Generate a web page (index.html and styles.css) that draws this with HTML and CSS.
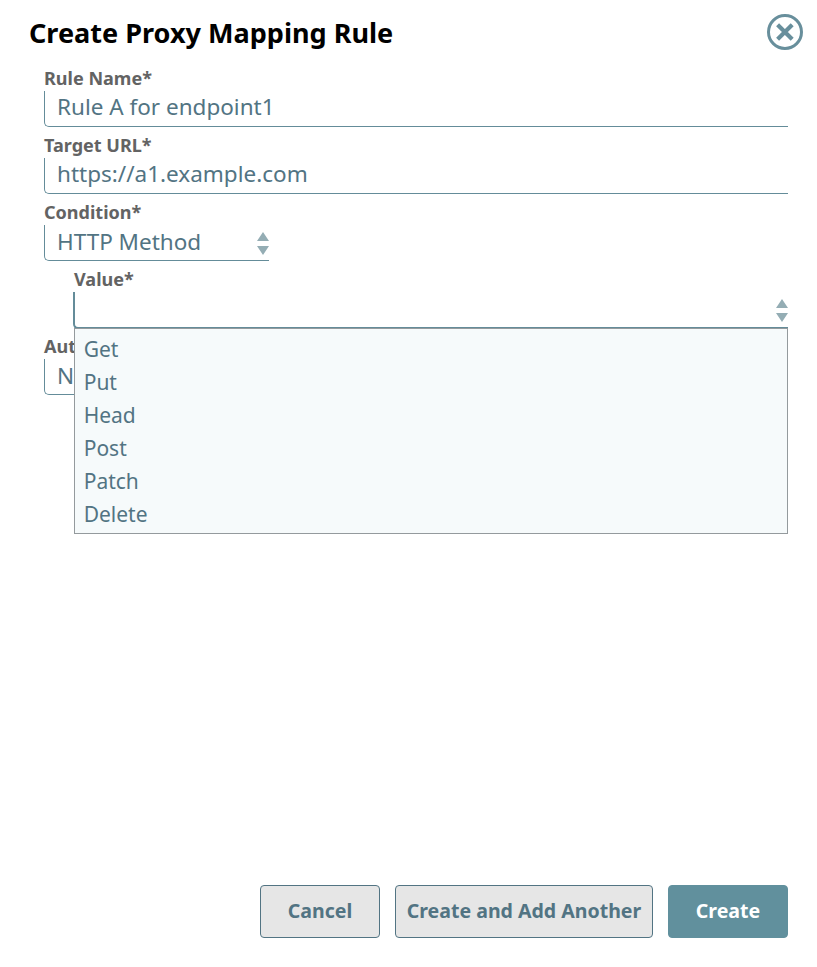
FILE: index.html
```html
<!DOCTYPE html>
<html lang="en">
<head>
<meta charset="utf-8">
<title>Create Proxy Mapping Rule</title>
<link rel="stylesheet" href="styles.css">
</head>
<body>
<main class="dialog">
  <header class="header">
    <h1 class="title">Create Proxy Mapping Rule</h1>
    <svg class="close" viewBox="0 0 36 36" role="img" aria-label="Close">
      <circle cx="18" cy="18" r="16.5" fill="none" stroke="#688f9c" stroke-width="3"/>
      <path d="M10.6 10.8 25.2 25.2M25.2 10.8 10.6 25.2" fill="none" stroke="#688f9c" stroke-width="4.2"/>
    </svg>
  </header>
  <section class="form">
    <div class="field">
      <div class="label">Rule Name*</div>
      <div class="control">Rule A for endpoint1</div>
    </div>
    <div class="field">
      <div class="label">Target URL*</div>
      <div class="control">https://a1.example.com</div>
    </div>
    <div class="field field-short">
      <div class="label">Condition*</div>
      <div class="control control-select">HTTP Method
        <svg class="arrows" viewBox="0 0 12 23"><path d="M6 0 12 9H0ZM0 14H12L6 23Z" fill="#94adb4"/></svg>
      </div>
    </div>
    <div class="field field-nested">
      <div class="label">Value*</div>
      <div class="control control-select control-open">
        <svg class="arrows" viewBox="0 0 12 23"><path d="M6 0 12 9H0ZM0 14H12L6 23Z" fill="#94adb4"/></svg>
      </div>
      <ul class="menu">
        <li>Get</li>
        <li>Put</li>
        <li>Head</li>
        <li>Post</li>
        <li>Patch</li>
        <li>Delete</li>
      </ul>
    </div>
    <div class="field field-short">
      <div class="label">Aut</div>
      <div class="control control-select">N</div>
    </div>
  </section>
  <footer class="actions">
    <button class="button">Cancel</button>
    <button class="button button-wide">Create and Add Another</button>
    <button class="button button-primary">Create</button>
  </footer>
</main>
</body>
</html>
```

FILE: styles.css
```css
* {
  box-sizing: border-box;
}

body {
  margin: 0;
  background: #fff;
  font-family: "Noto Sans", sans-serif;
}

.dialog {
  display: flex;
  flex-direction: column;
  height: 967px;
  padding: 14px 14px 29px 29px;
}

.header {
  display: flex;
  justify-content: space-between;
  height: 53px;
}

.title {
  margin: 0;
  color: #000;
  font-size: 27.06px;
  font-weight: 700;
  line-height: 38px;
}

.close {
  width: 36px;
  height: 36px;
}

.form {
  display: flex;
  flex-direction: column;
  gap: 7px;
  padding: 0 15px;
}

.field {
  position: relative;
  height: 60px;
}

.field-short {
  width: 225px;
}

.field-nested {
  margin-left: 30px;
}

.label {
  height: 24px;
  color: #636363;
  font-size: 18.04px;
  font-weight: 700;
  line-height: 22px;
}

.control {
  height: 36px;
  padding-left: 12px;
  border: solid #648c99;
  border-width: 0 0 1px 1px;
  border-bottom-left-radius: 5px;
  color: #527483;
  font-size: 22.5px;
  line-height: 31px;
}

.control-select {
  display: flex;
  justify-content: space-between;
  line-height: 33px;
}

.control-open {
  height: 37px;
  margin-left: -1px;
  border-width: 0 0 2px 2px;
}

.arrows {
  width: 12px;
  height: 23px;
  margin: 7px 0 0 auto;
}

.menu {
  position: absolute;
  z-index: 1;
  top: 60px;
  left: 0;
  width: 100%;
  height: 206px;
  margin: 0;
  padding: 4px 8.7px;
  border: 1px solid #949a9d;
  background: #f6fafb;
  color: #527483;
  font-size: 21px;
  line-height: 33px;
  list-style: none;
}

.actions {
  display: flex;
  justify-content: flex-end;
  gap: 15px;
  margin-top: auto;
  padding-right: 15px;
}

.button {
  width: 120px;
  height: 53px;
  padding: 0 0 2px;
  border: 1px solid #527483;
  border-radius: 4px;
  background: #e6e6e6;
  color: #527483;
  font-family: inherit;
  font-size: 19.55px;
  font-weight: 700;
}

.button-wide {
  width: 258px;
}

.button-primary {
  border-color: #61909d;
  background: #61909d;
  color: #fff;
}
```
